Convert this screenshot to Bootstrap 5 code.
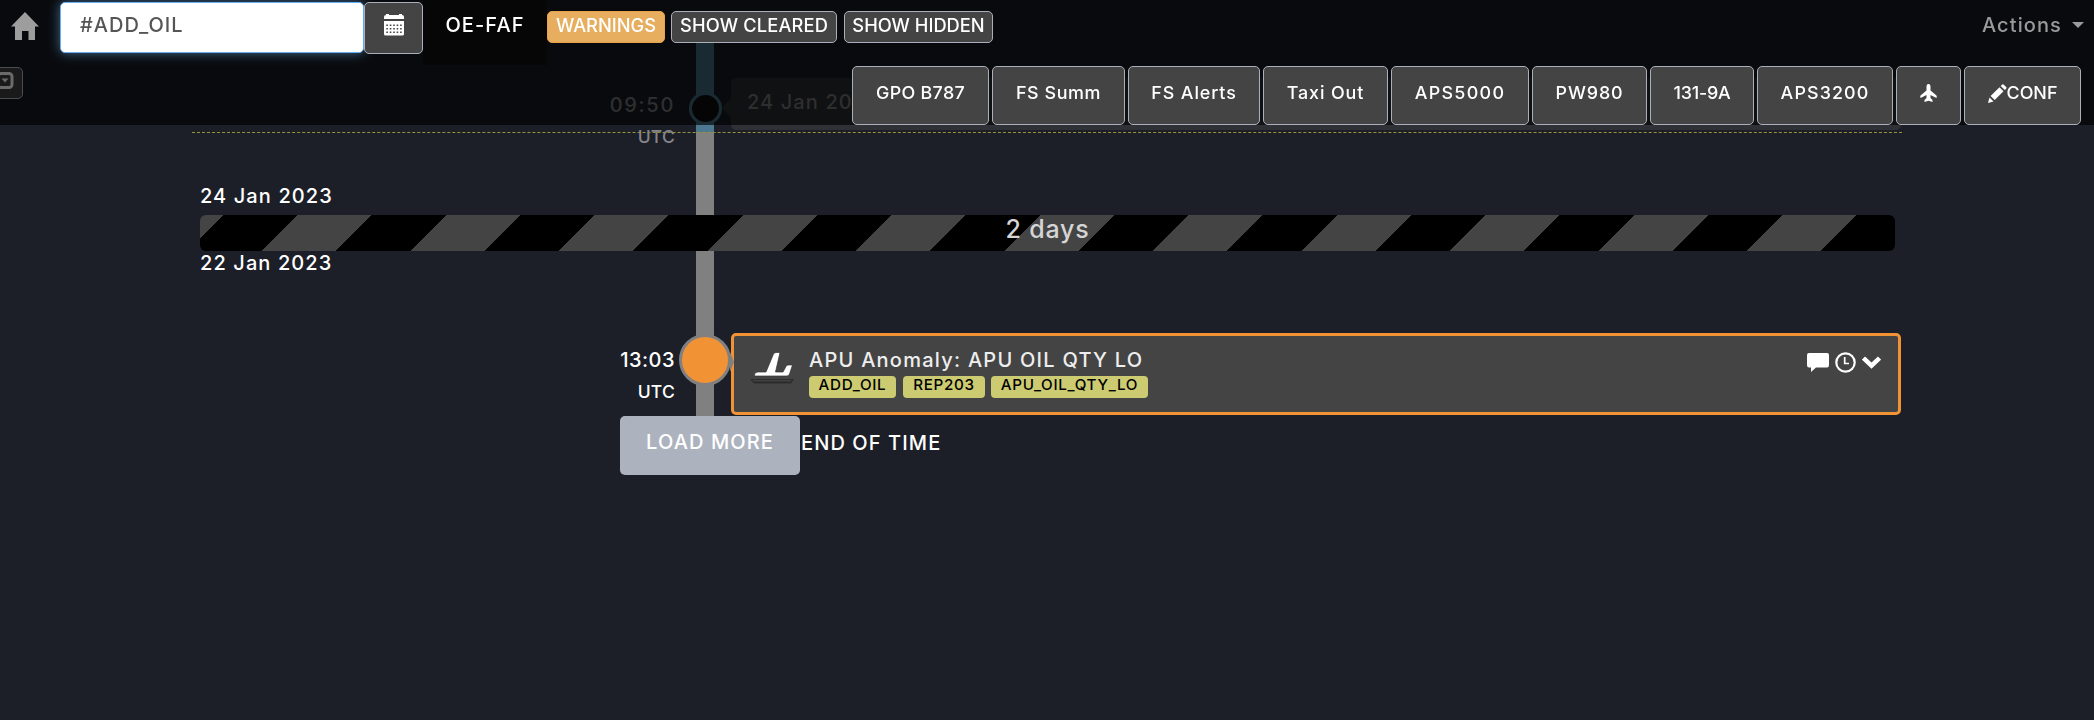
<!DOCTYPE html>
<html lang="en">
<head>
<meta charset="utf-8">
<title>OE-FAF timeline</title>
<meta name="viewport" content="width=device-width, initial-scale=1">
<link href="https://cdn.jsdelivr.net/npm/bootstrap@5.3.0/dist/css/bootstrap.min.css" rel="stylesheet">
<style>
body{background:#1c1f28;color:#fff;font-family:Inter,"Liberation Sans",sans-serif;font-size:20px;font-weight:500;line-height:28px;letter-spacing:1.1px;height:720px;overflow:hidden}
svg{display:block;flex:none}
.topbar{background:rgba(0,0,0,.65);height:125px;z-index:10}
.home-link{width:60px;padding:12px 0 0 11px}
.search-box{width:304px;height:51px;margin-top:2px;border:1px solid #6cacf0;border-radius:5px;background:#fff;color:#555;padding:0 0 5px 19px;box-shadow:0 0 12px rgba(102,175,233,.6);font-size:inherit;font-weight:500;line-height:28px;letter-spacing:1px}
.tool{background:#444;border:1px solid #aab0bb;border-radius:5px;color:#fff;padding:0;font-weight:500;white-space:nowrap}
.cal{width:59px;height:52px;margin-top:2px;padding-top:11px}
.reg{width:124px;height:65px;background:#060606;padding-top:11px}
.chip{height:32px;margin-top:11px;font-size:18.3px;line-height:25px;padding-bottom:4px;letter-spacing:0}
.warn{background:#e6ae5e;border-color:#e6a34a;width:118px;margin-right:6px}
.cleared{width:166px;margin-right:7px;letter-spacing:.15px}
.hid{width:149px}
.actions{color:#9a9a9a;margin:11px 10px 0 auto;gap:10px}
.second{position:absolute;top:66px;left:0;right:13px}
.side-btn{width:28px;height:32px;margin:1px 0 0 -5px;padding:3px 0 0 0;background:#1a1a1a;border-color:#4b4d50}
.btns{gap:3px}
.btns .tool{height:59px;font-size:17.9px;padding-bottom:5px;display:flex;align-items:center;justify-content:center;letter-spacing:.9px}
.btns .b1{width:137px;letter-spacing:.3px}
.btns .b2{width:133px;letter-spacing:.6px}
.btns .b3{width:132px}
.btns .b4{width:125px}
.btns .b5{width:138px;letter-spacing:1.3px}
.btns .b6{width:115px}
.btns .b7{width:104px;letter-spacing:-.2px}
.btns .b8{width:136px;letter-spacing:1.1px}
.btns .b9{width:65px}
.btns .b10{width:117px;letter-spacing:0}
.timeline{margin-left:192px;width:1710px;position:relative}
.rail{position:absolute;left:504px;top:20px;width:18px;height:396px;background:linear-gradient(#4c7890 0 112px,#808080 112px)}
.event{display:grid;grid-template-columns:483px 56px 1170px;position:relative}
.ev-old{height:133px;padding-top:78px;border-bottom:1px dashed #94943a}
.stamp{text-align:right;padding-top:12px;line-height:31px;height:54px;letter-spacing:.5px}
.ev-old .stamp{color:#85858b}
.ev-old .hour{letter-spacing:1.7px}
.utc{font-size:17.5px;letter-spacing:.2px}
.dot{border-radius:50%;border:3px solid #808080;background:#f19335}
.dot.sm{width:33px;height:33px;background:#101010;border-color:#4c7890;margin:14px 0 0 14px}
.dot.lg{width:52px;height:52px;margin:1px 0 0 4px}
.panel{background:#303136;height:52px;border-radius:5px;position:relative;padding:10px 16px;color:#858585;white-space:nowrap}
.panel::before{content:"";position:absolute;left:-9px;top:20px;border:solid transparent;border-width:10px 9px 10px 0;border-right-color:#303136}
.gap-block{padding:47px 7px 0 8px;position:relative}
.from{line-height:33px;margin-bottom:2px}
.to{line-height:24px}
.stripes{height:36px;border-radius:6px;background:repeating-linear-gradient(-45deg,#000 0 52.5px,#444 52.5px 105px);color:#d5d5d5;font-size:25px;letter-spacing:.8px;text-align:center;line-height:29px}
.ev-new{margin-top:58px}
.alert-panel{height:82px;border:3px solid #f19335;border-radius:5px;background:#444;padding:10px 17px 0 19px;color:#eee;position:relative}
.alert-panel::before{content:"";position:absolute;left:-4px;top:16px;border:solid transparent;border-width:10px 0 10px 4px;border-left-color:#808080}
.tail{margin:6px 15px 0 -3px}
.headline{letter-spacing:1.25px}
.tags{margin-top:2px}
.tagx{background:#cccb72;color:#000;border-radius:4px;height:22px;font-size:15.2px;line-height:17px;text-align:center;white-space:nowrap;letter-spacing:.7px}
.t1{width:87px;margin-right:7px}
.t2{width:82px;margin-right:6px}
.t3{width:157px}
.marks{margin:6px 0 0 auto;gap:6px}
.load{width:180px;height:59px;background:#acb3bf;border:0;border-radius:5px;color:#fff;font-size:20px;font-weight:500;padding:0 0 7px;letter-spacing:1.1px}
.foot{padding-left:428px;margin-top:1px;position:relative}
.end{padding:13px 0 0 1px}
</style>
</head>
<body>
<header class="topbar fixed-top">
  <div class="d-flex align-items-start">
    <a class="home-link"><svg width="28" height="28" viewBox="0 0 28 28" fill="#9d9d9d"><path d="M14 0L28 14.500H24V28H17.500V19H11V28H4V14.500H0Z"/></svg></a>
    <input class="form-control search-box" value="#ADD_OIL" aria-label="Search">
    <button class="btn tool cal d-flex justify-content-center align-items-start" aria-label="Date"><svg width="20" height="22" viewBox="0 0 20 22" fill="#fff"><path d="M0 5V3Q0 1 2 1V0H5V1H15V0H18V1Q20 1 20 3V5ZM0 7H20V20Q20 21.500 18.500 21.500H1.500Q0 21.500 0 20Z"/><path d="M2.300 11.300H18M2.300 14.800H18M2.300 18.300H18" stroke="#444" stroke-width="1.500" stroke-dasharray="1.600 1.850"/></svg></button>
    <div class="reg text-center">OE-FAF</div>
    <button class="btn tool chip warn">WARNINGS</button>
    <button class="btn tool chip cleared">SHOW CLEARED</button>
    <button class="btn tool chip hid">SHOW HIDDEN</button>
    <div class="actions d-flex align-items-center">Actions<svg width="12" height="6" fill="#9a9a9a"><path d="M0 0H12L6 6Z"/></svg></div>
  </div>
  <div class="second d-flex justify-content-between align-items-start">
    <button class="btn tool side-btn d-flex align-items-start" aria-label="Expand"><svg width="18" height="18" viewBox="0 0 18 18"><rect x="2" y="2.500" width="14" height="14" rx="3" fill="none" stroke="#6a6a6a" stroke-width="3"/><path d="M5.500 7.500H12.500L9 11.500Z" fill="#6a6a6a"/></svg></button>
    <div class="btns d-flex">
      <button class="btn tool b1">GPO B787</button>
      <button class="btn tool b2">FS Summ</button>
      <button class="btn tool b3">FS Alerts</button>
      <button class="btn tool b4">Taxi Out</button>
      <button class="btn tool b5">APS5000</button>
      <button class="btn tool b6">PW980</button>
      <button class="btn tool b7">131-9A</button>
      <button class="btn tool b8">APS3200</button>
      <button class="btn tool b9" aria-label="Aircraft"><svg width="17" height="18" viewBox="0 0 17 18" fill="#fff"><path d="M8.500 0Q10.500 0 10.500 3V6.500L16.500 11.500Q17 12.500 16.500 14L10.500 11V14L12.500 16V18L8.500 16.800L4.500 18V16L6.500 14V11L.500 14Q0 12.500.500 11.500L6.500 6.500V3Q6.500 0 8.500 0Z"/></svg></button>
      <button class="btn tool b10"><svg width="19" height="19" viewBox="0 0 19 19" fill="#fff"><path d="M0 19L1.500 13.500L5.500 17.500ZM2.600 12L11.500 3.200L15.500 7.200L6.700 16.100ZM12.700 2L14.200.500Q15 0 15.800.700L18.200 3.100Q18.900 4 18.200 4.700L16.800 6.100Z"/></svg>CONF</button>
    </div>
  </div>
</header>
<main class="timeline">
  <div class="rail"></div>
  <section class="event ev-old">
    <div class="stamp"><span class="hour">09:50</span><br><span class="utc">UTC</span></div>
    <div><div class="dot sm"></div></div>
    <div class="panel">24 Jan 2023</div>
  </section>
  <section class="gap-block">
    <div class="from">24 Jan 2023</div>
    <div class="stripes">2 days</div>
    <div class="to">22 Jan 2023</div>
  </section>
  <section class="event ev-new">
    <div class="stamp">13:03<br><span class="utc">UTC</span></div>
    <div><div class="dot lg"></div></div>
    <div class="alert-panel d-flex align-items-start">
      <svg class="tail" width="44" height="34" viewBox="0 0 44 34"><path d="M0 27H44L41 31.500H4Z" fill="#2d2d2d"/><path d="M3 28.700H41" stroke="#4a4a4a"/><path d="M4.500 23Q4.500 20 8 20H16L23.500 2Q24.300.500 26 .500H30L25.500 20H33L36 14.500Q36.500 13 38 13H42.500L39.500 22Q38.800 24 37 24H4.500Z" fill="#fff" stroke="#333" stroke-width=".7"/></svg>
      <div>
        <div class="headline">APU Anomaly: APU OIL QTY LO</div>
        <div class="tags d-flex"><span class="tagx t1">ADD_OIL</span><span class="tagx t2">REP203</span><span class="tagx t3">APU_OIL_QTY_LO</span></div>
      </div>
      <div class="marks d-flex">
        <svg width="22" height="20" viewBox="0 0 22 20" fill="#fff"><path d="M2 1H20Q22 1 22 3V13Q22 15.500 20 15.500H9L4 20V15.500H2Q0 15.500 0 13V3Q0 1 2 1Z"/></svg>
        <svg width="21" height="21" viewBox="0 0 21 21" fill="none" stroke="#fff"><circle cx="10.500" cy="10.500" r="9.200" stroke-width="2.200"/><path d="M9.700 5V11.500H14" stroke-width="1.700"/></svg>
        <svg width="19" height="21" viewBox="0 0 19 21" fill="none"><path d="M1.500 6L9.500 13.700L17.500 6" stroke="#fff" stroke-width="4.500"/></svg>
      </div>
    </div>
  </section>
  <div class="foot d-flex"><button class="btn load">LOAD MORE</button><span class="end">END OF TIME</span></div>
</main>
<script src="https://cdn.jsdelivr.net/npm/bootstrap@5.3.0/dist/js/bootstrap.bundle.min.js"></script>
</body>
</html>
